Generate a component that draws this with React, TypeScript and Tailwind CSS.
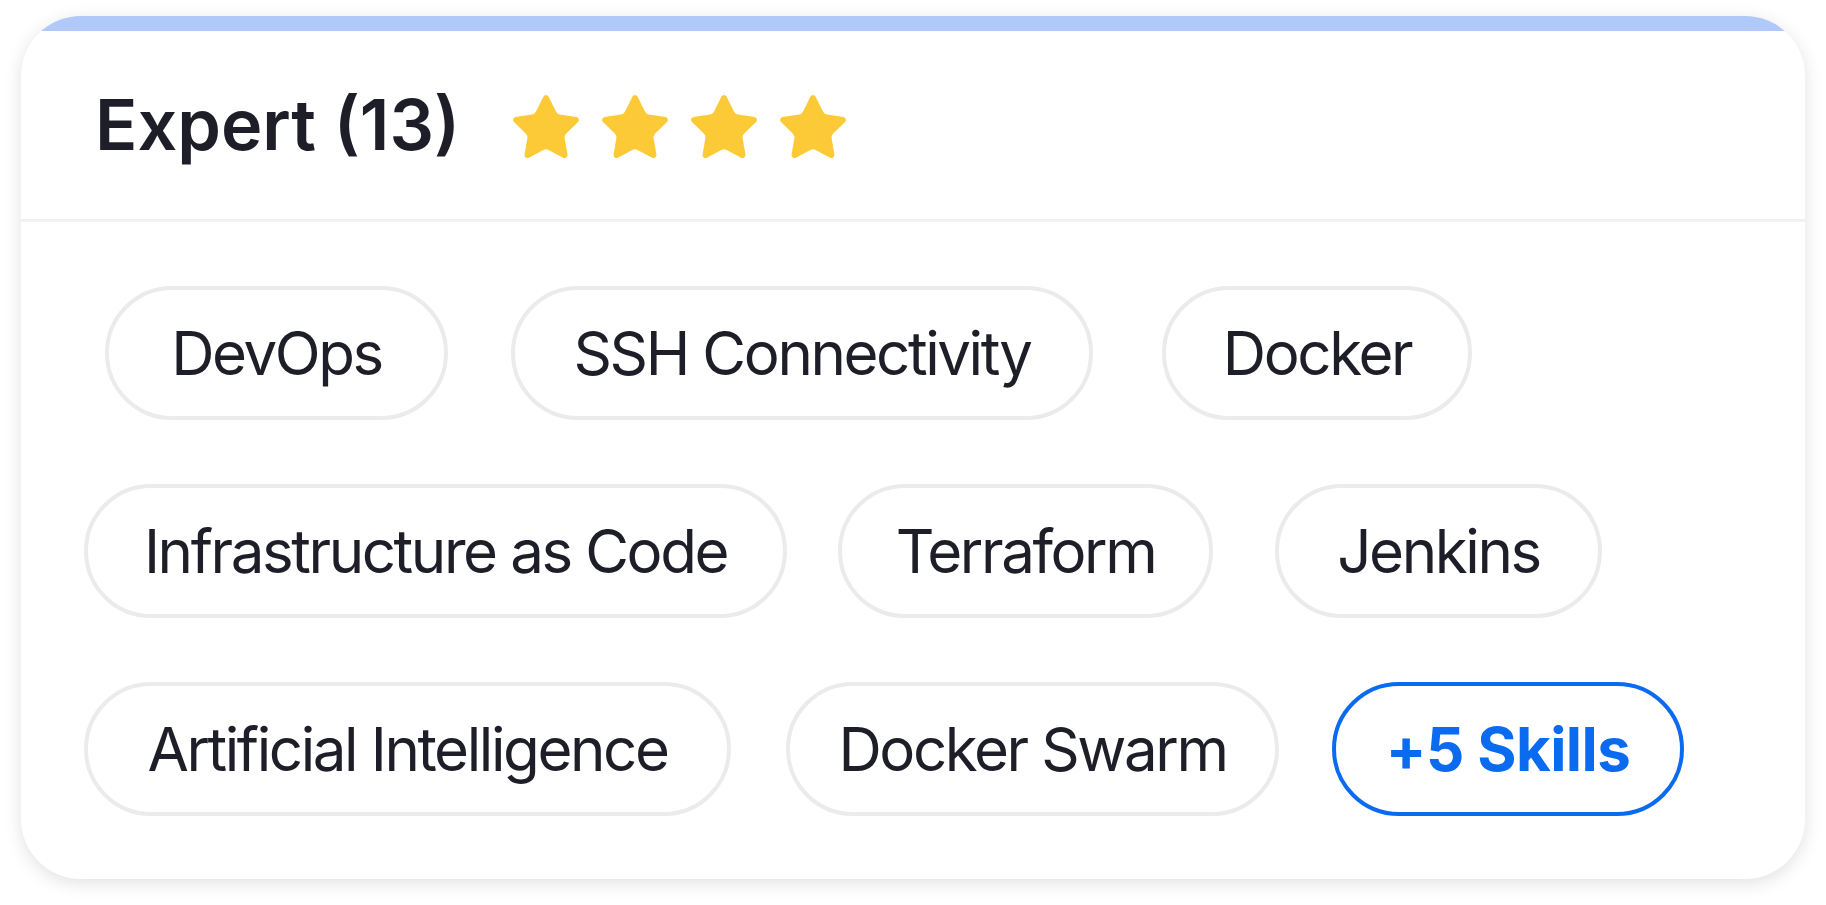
import React from "react";

const Star = () => (
  <svg width="76" height="76" viewBox="0 0 24 24" className="shrink-0">
    <path
      d="M11.525 2.295a.53.53 0 0 1 .95 0l2.31 4.679a2.123 2.123 0 0 0 1.595 1.16l5.166.756a.53.53 0 0 1 .294.904l-3.736 3.638a2.123 2.123 0 0 0-.611 1.878l.882 5.14a.53.53 0 0 1-.771.56l-4.618-2.428a2.122 2.122 0 0 0-1.973 0L6.396 21.01a.53.53 0 0 1-.77-.56l.881-5.139a2.122 2.122 0 0 0-.611-1.879L2.16 9.795a.53.53 0 0 1 .294-.906l5.165-.755a2.122 2.122 0 0 0 1.597-1.16z"
      fill="#FBCA36"
      stroke="#FBCA36"
      strokeWidth="0.8"
      strokeLinejoin="round"
    />
  </svg>
);

const Chip = ({ label, className }: { label: string; className: string }) => (
  <div
    className={
      "h-[134px] shrink-0 rounded-full border-[4px] border-[#ebebeb] bg-white flex items-center justify-center text-[60px] text-[#1e1e28] tracking-[-0.04em] whitespace-nowrap " +
      className
    }
  >
    {label}
  </div>
);

export default function App() {
  return (
    <div
      className="w-[1826px] h-[905px] bg-white pt-[16px] pl-[21px]"
      style={{ fontFamily: "Inter, 'Noto Sans', sans-serif" }}
    >
      <div className="w-[1784px] h-[863px] rounded-[60px] bg-white overflow-hidden shadow-[0_4px_18px_rgba(0,0,0,0.12)] flex flex-col">
        <div className="h-[15px] bg-[#b0c9f8] shrink-0" />
        <div className="h-[188px] flex items-center pl-[74px] shrink-0">
          <span className="text-[70px] font-semibold text-[#1e1e28] leading-none">
            Expert (13)
          </span>
          <div className="flex items-center gap-[13px] ml-[48px] mt-[6px]">
            <Star />
            <Star />
            <Star />
            <Star />
          </div>
        </div>
        <div className="h-[3px] bg-[#f1f1f1] shrink-0" />
        <div className="flex flex-col gap-[64px] pt-[64px] pl-[63px]">
          <div className="flex">
            <Chip label="DevOps" className="w-[343px] ml-[21px]" />
            <Chip label="SSH Connectivity" className="w-[582px] ml-[63px]" />
            <Chip label="Docker" className="w-[310px] ml-[69px]" />
          </div>
          <div className="flex">
            <Chip label="Infrastructure as Code" className="w-[703px]" />
            <Chip label="Terraform" className="w-[375px] ml-[51px]" />
            <Chip label="Jenkins" className="w-[327px] ml-[62px]" />
          </div>
          <div className="flex">
            <Chip label="Artificial Intelligence" className="w-[647px]" />
            <Chip label="Docker Swarm" className="w-[493px] ml-[55px]" />
            <div className="w-[352px] ml-[53px] h-[134px] shrink-0 rounded-full border-[4px] border-[#0b6bf0] bg-white flex items-center justify-center text-[60px] font-bold text-[#0b6bf0] tracking-[-0.01em] whitespace-nowrap">
              +5 Skills
            </div>
          </div>
        </div>
      </div>
    </div>
  );
}
